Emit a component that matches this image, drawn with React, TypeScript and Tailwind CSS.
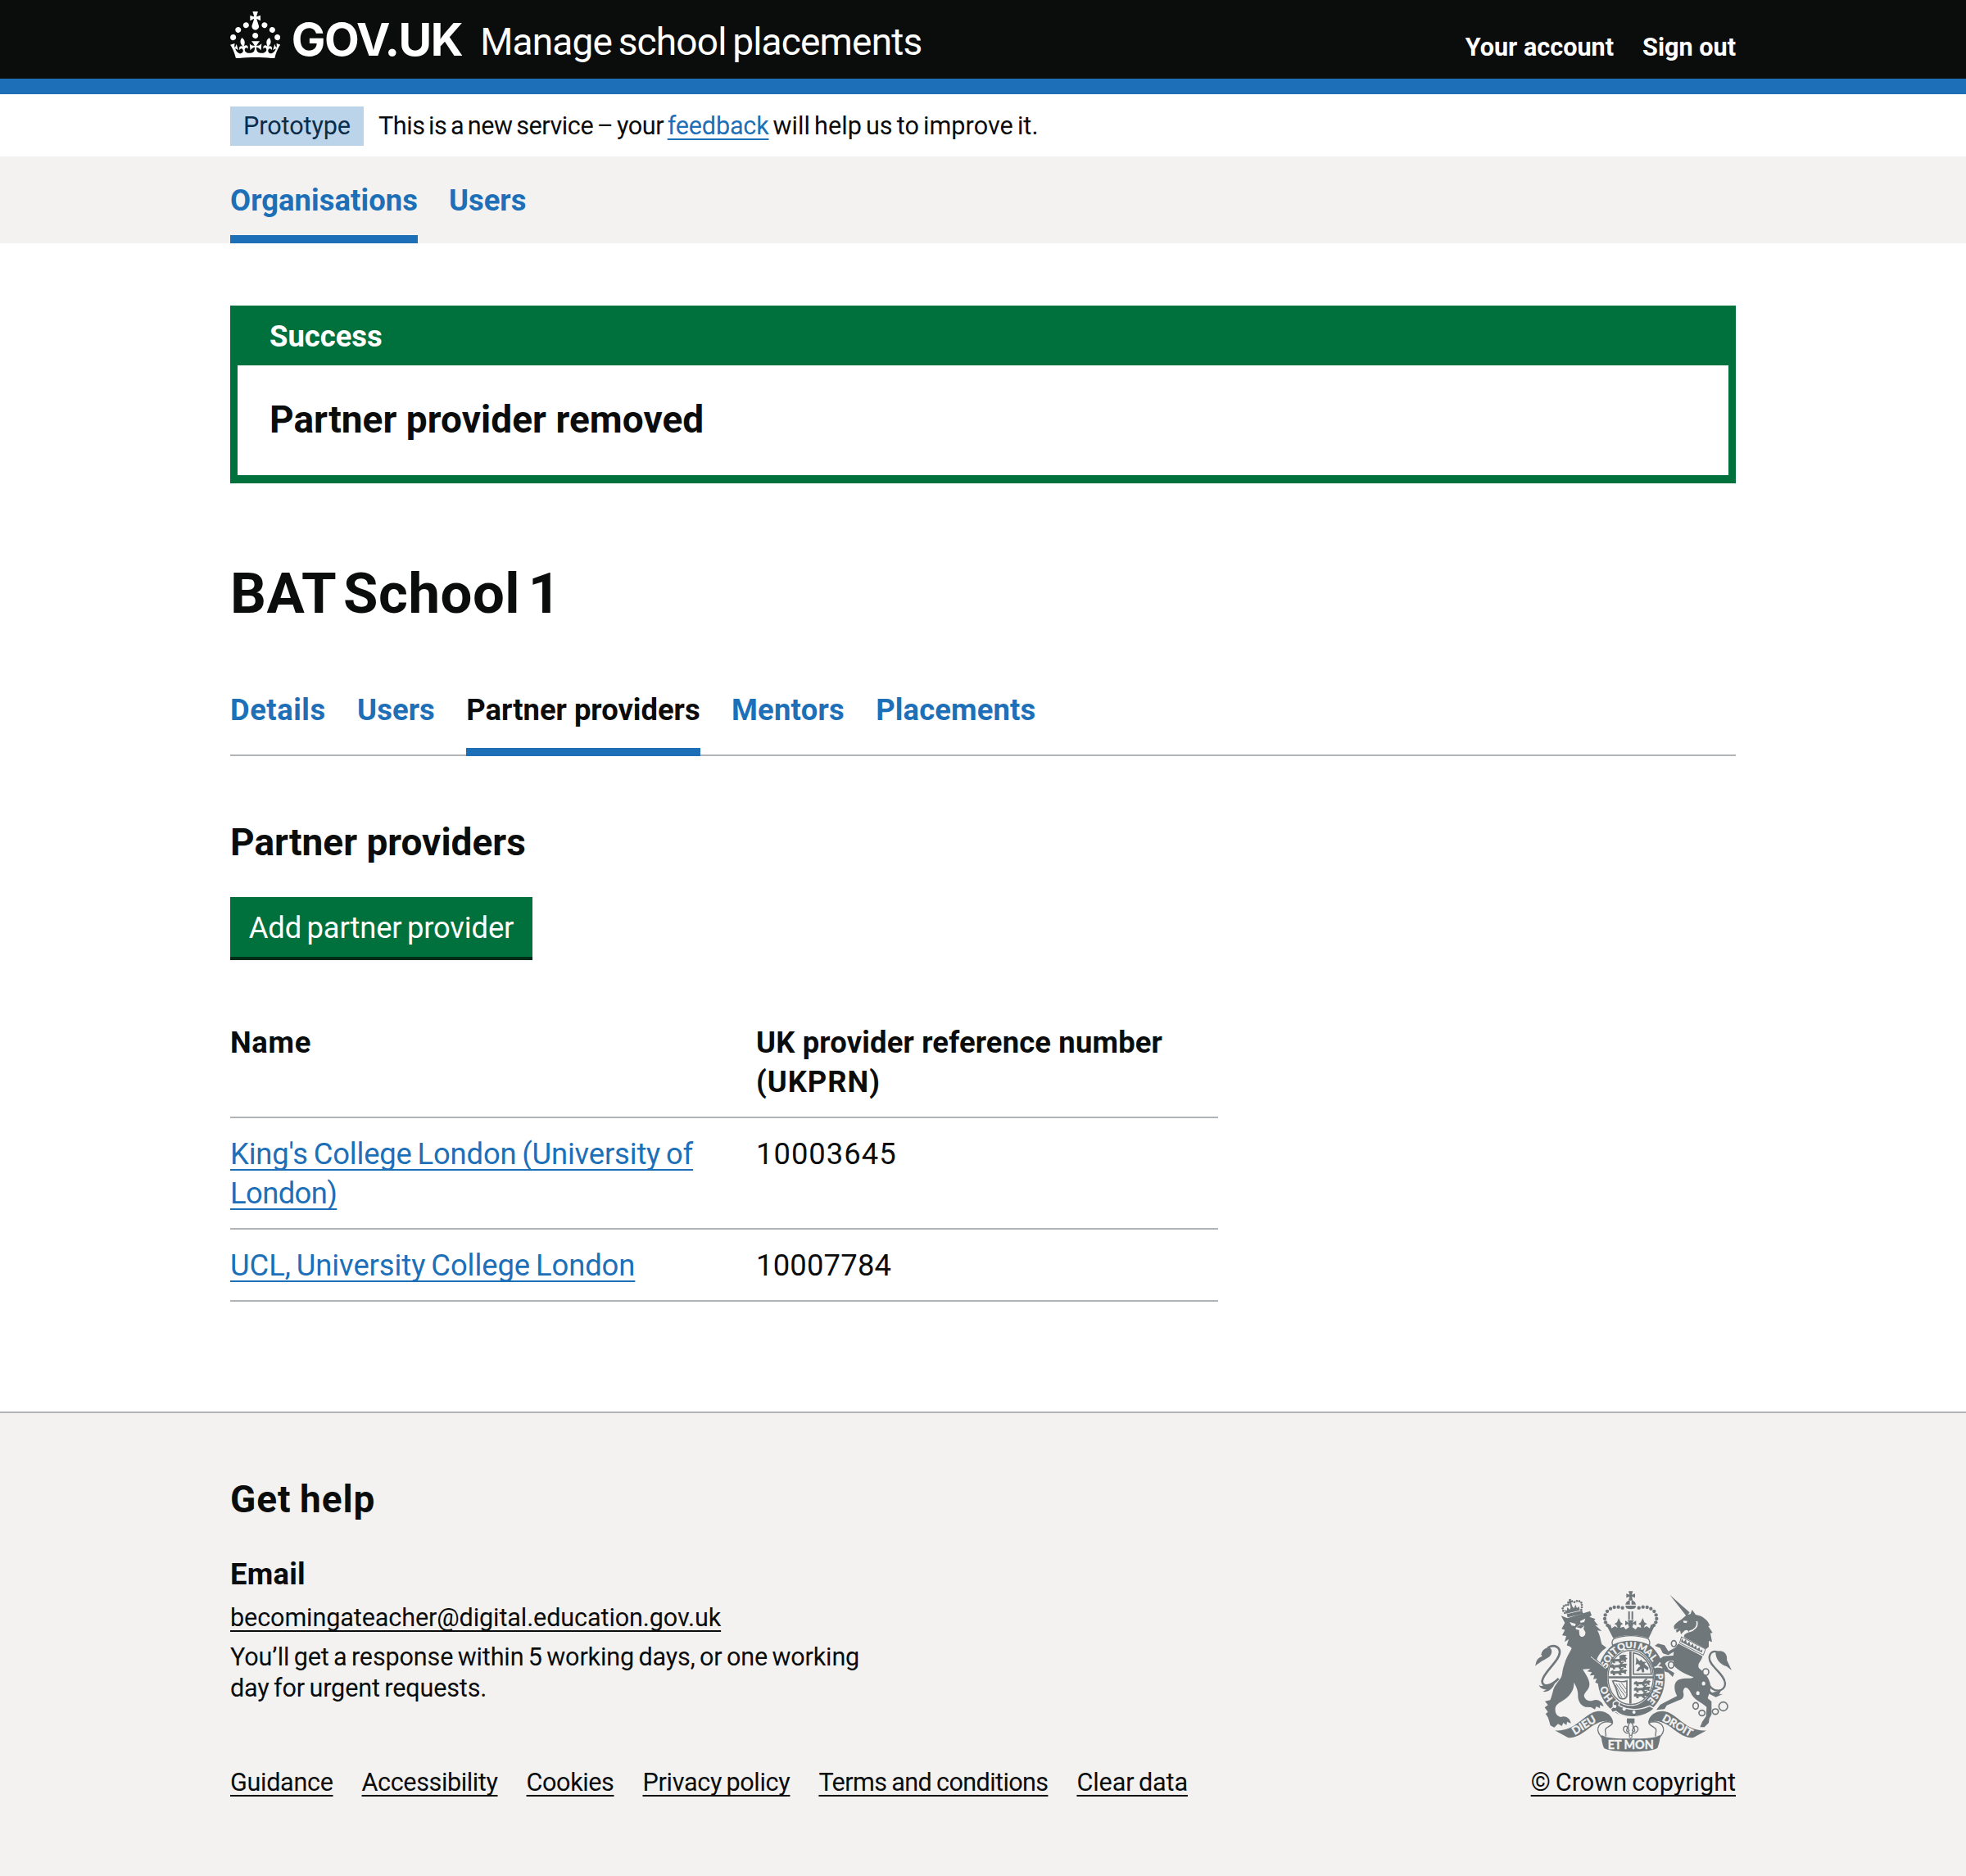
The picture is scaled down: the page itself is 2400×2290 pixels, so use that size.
import type { ReactNode } from "react";

const GREY = "#6f777b";
const PALE = "#f3f2f1";

function Crown() {
  return (
    <svg viewBox="0 0 32 30" className="h-[57.5px] w-[61.3px] shrink-0 fill-white" aria-hidden="true">
      <path d="M22.6 10.4c-1 .4-2-.1-2.4-1-.4-.9.1-2 1-2.4.9-.4 2 .1 2.4 1s-.1 2-1 2.4m-5.9 6.7c-.9.4-2-.1-2.4-1-.4-.9.1-2 1-2.4.9-.4 2 .1 2.4 1s-.1 2-1 2.4m10.8-3.7c-1 .4-2-.1-2.4-1-.4-.9.1-2 1-2.4.9-.4 2 .1 2.4 1s0 2-1 2.4m3.3 4.8c-1 .4-2-.1-2.4-1-.4-.9.1-2 1-2.4.9-.4 2 .1 2.4 1s-.1 2-1 2.4M17 4.7l2.3 1.2V2.5l-2.3.7-.2-.2.9-3h-3.4l.9 3-.2.2c-.1.1-2.3-.7-2.3-.7v3.4L15 4.7c.1.1.1.2.2.2l-1.3 4c-.1.2-.1.4-.1.6 0 1.1.8 2 1.9 2.2h.7c1-.2 1.9-1.1 1.9-2.1 0-.2 0-.4-.1-.6l-1.3-4c-.1-.2 0-.2.1-.3m-7.6 5.7c.9.4 2-.1 2.4-1 .4-.9-.1-2-1-2.4-.9-.4-2 .1-2.4 1s0 2 1 2.4m-5 3c.9.4 2-.1 2.4-1 .4-.9-.1-2-1-2.4-.9-.4-2 .1-2.4 1s.1 2 1 2.4m-3.2 4.8c.9.4 2-.1 2.4-1 .4-.9-.1-2-1-2.4-.9-.4-2 .1-2.4 1s0 2 1 2.4m14.8 11c4.4 0 8.6.3 12.3.8 1.1-4.5 2.4-7 3.7-8.8l-2.5-.9c.2 1.3.3 1.9 0 2.7-.4-.4-.8-1.1-1.1-2.3l-1.2 4c.7-.5 1.3-.8 2-.9-1.1 2.5-2.6 3.1-3.5 3-1.1-.2-1.7-1.2-1.5-2.1.3-1.2 1.5-1.5 2.1-.1 1.1-2.3-.8-3-2-2.3 1.9-1.9 2.1-3.5.6-5.6-2.1 1.6-2.1 3.2-1.2 5.5-1.2-1.4-3.2-.6-2.5 1.6.9-1.4 2.1-.5 1.9.8-.2 1.1-1.7 2.1-3.5 1.9-2.7-.2-2.9-2.1-2.9-3.6.7-.1 1.9.5 2.9 1.9l.4-4.3c-1.1 1.1-2.1 1.4-3.2 1.4.4-1.2 2.1-3 2.1-3h-5.4s1.7 1.9 2.1 3c-1.1 0-2.1-.2-3.2-1.4l.4 4.3c1-1.4 2.2-2 2.9-1.9-.1 1.5-.2 3.4-2.9 3.6-1.9.2-3.4-.8-3.5-1.9-.2-1.3 1-2.2 1.9-.8.7-2.3-1.2-3-2.5-1.6.9-2.2.9-3.9-1.2-5.5-1.5 2-1.3 3.7.6 5.6-1.2-.7-3.1 0-2 2.3.6-1.4 1.8-1.1 2.1.1.2.9-.3 1.9-1.5 2.1-.9.2-2.4-.5-3.5-3 .6 0 1.2.3 2 .9l-1.2-4c-.3 1.1-.7 1.9-1.1 2.3-.3-.8-.2-1.4 0-2.7l-2.9.9C1.3 23 2.6 25.5 3.7 30c3.7-.5 7.9-.8 12.3-.8" />
    </svg>
  );
}

/* Letters of the garter motto with their angle, clockwise from the top of the ring. */
const MOTTO: [string, number][] = [
  ["H", -127], ["O", -112],
  ["S", -67], ["O", -55], ["I", -45], ["T", -36],
  ["Q", -20], ["U", -4], ["I", 8],
  ["M", 24], ["A", 40], ["L", 53], ["Y", 70],
  ["P", 88], ["E", 99], ["N", 111], ["S", 123], ["E", 134],
];
const CROWN_PEARLS = [[362, 125], [347, 122], [332, 123], [318, 128], [306, 138], [299, 151], [297, 165], [300, 178], [307, 189]];
const LION_PEARLS = [[151, 144], [145, 136], [143, 127], [147, 119], [155, 115], [163, 114], [186, 104], [195, 100], [204, 101], [211, 106], [213, 114], [213, 123], [211, 132]];
const LIONS = [[318, 312], [318, 334], [318, 356], [404, 396], [404, 418], [404, 440]];

function MottoRing() {
  return (
    <>
      <path fillRule="evenodd" d="M394 238C462 238 517 302 517 382S462 525 394 525 271 462 271 382 326 238 394 238ZM392 276C345 276 306 322 306 380S345 484 392 484 478 438 478 380 439 276 392 276Z" fill={GREY} />
      {MOTTO.map(([c, deg], i) => {
        const a = (deg * Math.PI) / 180;
        const x = 393 + 92 * Math.sin(a);
        const y = 381 - 109 * Math.cos(a);
        return (
          <text key={i} x={x} y={y} transform={`rotate(${deg} ${x} ${y})`} textAnchor="middle" fontSize="35" fontWeight="700" fontFamily="Lato, sans-serif" fill={PALE} stroke={PALE} strokeWidth="1.2">
            {c}
          </text>
        );
      })}
    </>
  );
}

function RibbonSide() {
  return (
    <>
      <path d="M114 574L162 600C196 606 226 574 254 556C278 541 304 532 328 546C326 520 300 500 268 504C236 508 206 548 170 564C152 572 132 576 114 574Z" fill={GREY} />
      <path d="M326 546C298 536 270 548 272 574C273 586 282 592 290 606M326 546C322 560 300 560 299 572C298 582 304 588 300 596" fill="none" stroke={GREY} strokeWidth="4" />
    </>
  );
}

function CoatOfArms({ className }: { className: string }) {
  return (
    <svg viewBox="24 60 753 600" className={className} role="img" aria-label="Royal coat of arms" fill={GREY}>
      {/* Garter */}
      <MottoRing />

      {/* Lion */}
      <g>
        <path d="M158 148L214 135L218 146L161 160Z" />
        {LION_PEARLS.map(([x, y], i) => <circle key={i} cx={x} cy={y} r="4" />)}
        <path d="M165 94l9 -2l-1 6l7 -1l1 8l-7 0l4 14l6 8l6 -14l5 13l8 -6l3 14l-50 12l-7 -14l9 4l2 -14l9 10l3 -10l-3 -13l-8 2l-2 -8l7 -2Z" />
        <path d="M137 154L160 163L243 137L249 152L241 158L263 166L258 171L273 190L262 188L286 210L270 208C279 222 281 240 286 258L303 271C284 284 274 298 268 314C284 330 300 342 304 362L307 392L303 404L291 400L288 392L278 405L262 398L268 384L255 386L259 371L242 373L250 361L233 358L244 348L216 350C226 366 241 386 241 405C241 425 224 432 221 446C223 462 240 468 252 465C268 456 288 466 293 486L279 481L280 493L266 486L261 497L247 489L226 488C206 482 198 462 199 444C199 425 191 410 184 398C186 428 168 446 152 459C138 470 118 476 116 492C114 510 122 522 136 525C150 518 170 526 173 548L159 542L157 554L145 546L140 558L126 550L112 563L98 556C94 542 90 522 80 514L89 506L77 490L89 481L78 467L97 463C102 452 104 442 107 432C112 410 124 400 134 385C144 370 140 355 148 335C154 312 166 292 176 274C168 262 164 268 158 262L165 240L150 250L156 228L141 226L151 206L139 202L151 180Z" />
        <path d="M168 177L191 184L188 192L176 190ZM206 174L226 164L222 177L209 180Z" fill={PALE} />
        <path d="M190 198L207 186L222 192L219 202L226 214C228 232 208 238 204 222L203 206L192 204Z" fill={PALE} />
        <path d="M193 196L210 187L220 193L210 200Z" />
        <path d="M246 304C268 322 288 336 300 348" fill="none" stroke={PALE} strokeWidth="3" />
        <path d="M128 384C96 418 66 414 68 392C72 360 136 316 132 284C128 262 104 260 88 272" fill="none" stroke={GREY} strokeWidth="8" />
        <path d="M41 340C48 326 42 312 68 302L64 296C70 268 102 262 103 284C102 308 76 312 64 322C56 330 48 330 41 340Z" />
        <path d="M56 408C66 416 76 406 84 410L118 390C112 414 96 436 70 432L84 424C70 424 60 418 56 408Z" />
      </g>

      {/* Shield */}
      <g>
        <ellipse cx="392" cy="380" rx="83" ry="99" fill={PALE} stroke={GREY} strokeWidth="4" />
        <path d="M387 284h8v192h-8ZM311 376h164v7h-164Z" />
        <path d="M402 290C440 296 464 328 468 368H402Z" fill="none" stroke={GREY} strokeWidth="5" />
        <path d="M412 306l12 14l6 -6l6 8l14 2l-8 6l16 14l-4 10l-14 -10l2 16l-8 2l-4 -14l-10 10l-8 -2l8 -12l8 -6l-10 -8l-8 4l2 -12Z" />
        {LIONS.map(([x, y], i) => (
          <path key={i} transform={`translate(${x} ${y})`} d="M0 2l8 -5l6 4l18 -1l7 -9l8 -4l2 4l-7 6l14 -2l6 4l-6 4l2 8l-6 0l-4 -4l-10 1l4 7l-8 1l-6 -7l-12 1l2 6l-9 0l-1 -6l-8 0Z" />
        ))}
        <path d="M350 300l14 -4l14 2l-6 6l8 8l-16 -2l-12 4Z" />
        <path d="M326 393C342 388 356 402 378 392L378 448C372 462 352 462 346 446C342 428 334 408 326 393Z" fill="none" stroke={GREY} strokeWidth="5" />
        <path d="M338 402L372 450M348 402L374 438M358 400L376 424M336 408L360 454" stroke={GREY} strokeWidth="3" />
        <path d="M328 472l12 -8l12 8l-4 10C380 500 420 502 462 484L478 494C440 530 370 534 338 504l-14 4l-6 -12l10 -8Z" stroke={PALE} strokeWidth="4" />
        <circle cx="368" cy="496" r="6" fill={PALE} />
        <circle cx="404" cy="507" r="6" fill={PALE} />
        <circle cx="334" cy="486" r="6" fill={PALE} />
      </g>

      {/* Crown */}
      <g>
        <path d="M331 238Q392 216 456 238Q466 250 459 262Q392 232 326 262Q320 248 331 238Z" fill={PALE} stroke={GREY} strokeWidth="4" />
        <path d="M384 64h16l-4 13l12 -4v15l-12 -4l4 14h-16l4 -14l-12 4v-15l12 4Z" />
        <path d="M373 113C374 102 382 98 389 98V113ZM411 113C410 102 402 98 395 98V113Z" />
        <path d="M372 117h40l-4 10q-16 6 -32 0Z" />
        <path d="M383 138h6v30h-6ZM395 138h6v30h-6Z" />
        {CROWN_PEARLS.map(([x, y], i) => (
          <g key={i}>
            <circle cx={x} cy={y} r="6.5" />
            <circle cx={784 - x} cy={y} r="6.5" />
          </g>
        ))}
        <path d="M304 190L318 186L322 200L334 192L344 198L340 188L332 184L342 178L348 162L355 178L364 184L356 188L354 198L366 194L374 204L386 196L382 184L372 190V172L386 180L380 170H404L398 180L412 172V190L402 184L398 196L410 204L418 194L430 198L428 188L420 184L429 178L436 162L442 178L452 184L444 188L440 198L450 192L462 200L466 186L480 190L458 236Q392 214 328 236Z" />
      </g>

      {/* Unicorn */}
      <g>
        <path d="M535 77L608 142L596 155Z" />
        <path d="M550 193C552 183 570 172 578 167L598 150L611 148L617 132L630 150C654 154 674 168 682 190L676 192L692 216L684 218L690 250L678 246L678 268L668 276L590 234C582 226 592 220 606 214C600 204 596 205 590 208L576 222L573 208L560 216L558 206L568 200L552 204Z" />
        <path d="M584 172l16 1l-4 8l-10 -2Z" fill={PALE} />
        <path d="M634 174C640 194 624 208 606 212" fill="none" stroke={PALE} strokeWidth="5" />
        <path d="M578 231L666 276L658 298L571 254Z" fill={PALE} stroke={GREY} strokeWidth="3" />
        <path d="M576 250l4 -14l6 14l8 -10l4 17l9 -9l4 16l9 -8l3 14l9 -8l2 15l10 -8l3 14l8 -6l-2 12Z" />
        <path d="M566 256L655 302C652 320 634 328 642 346C662 362 676 378 682 398C690 424 678 440 674 456L688 468V516L680 530L678 546L662 562H646L654 542L668 522L670 488C650 470 622 462 612 436C600 410 586 412 584 432C590 452 582 460 566 464L524 482L516 496L486 499L500 480L518 470L562 448C548 424 548 392 574 386C592 380 616 388 622 378C600 372 562 352 552 338L548 318C530 318 522 322 518 330L530 350L552 364L546 378L530 362L516 358L508 334L496 314L512 302L548 300L550 286L530 298L510 292L500 272L480 264L492 256L516 262L530 284L556 270Z" />
        <path d="M674 398C692 440 738 434 738 402C736 366 680 340 680 308C682 284 700 280 716 290" fill="none" stroke={GREY} strokeWidth="7" />
        <path d="M703 286C730 274 748 294 744 316L762 354L744 340C718 332 702 312 703 286Z" />
        <path d="M672 418L690 436L724 426L716 442L730 440L704 452L680 440Z" />
        <g fill={PALE} stroke={GREY} strokeWidth="5">
          <ellipse cx="550" cy="256" rx="9" ry="11" />
          <ellipse cx="540" cy="334" rx="10" ry="12" />
          <ellipse cx="667" cy="360" rx="11" ry="12" />
          <ellipse cx="659" cy="402" rx="9" ry="10" />
          <ellipse cx="638" cy="437" rx="9" ry="10" />
          <ellipse cx="630" cy="484" rx="10" ry="12" />
          <ellipse cx="653" cy="510" rx="11" ry="10" />
          <ellipse cx="702" cy="505" rx="11" ry="10" />
          <circle cx="731" cy="486" r="16" />
        </g>
      </g>

      {/* Ribbon */}
      <g>
        <RibbonSide />
        <g transform="translate(784 0) scale(-1 1)"><RibbonSide /></g>
        <path d="M285 590C300 602 340 604 392 604S484 602 500 590C500 606 496 624 490 638C470 656 314 656 294 638C288 624 284 606 285 590Z" />
        <path d="M378 530h28v18h-28Z" />
        <path d="M392 542C402 552 404 562 398 574C402 582 410 576 406 570C400 562 410 552 418 564C422 576 408 588 398 582L396 592H388L386 582C376 588 362 576 366 564C374 552 384 562 378 570C374 576 382 582 386 574C380 562 382 552 392 542Z" fill={PALE} stroke={GREY} strokeWidth="4" />
        <circle cx="392" cy="597" r="5" fill={PALE} stroke={GREY} strokeWidth="3" />
        <g fill={PALE} stroke={PALE} strokeWidth="1.2" fontFamily="Lato, sans-serif" fontWeight="700" textAnchor="middle">
          <text x="392" y="641" fontSize="43">ET MON</text>
          <text fontSize="40" transform="translate(228 566) rotate(-32)">DIEU</text>
          <text fontSize="39" transform="translate(557 567) rotate(30)">DROIT</text>
        </g>
      </g>
    </svg>
  );
}

function Container({ className = "", children }: { className?: string; children: ReactNode }) {
  return <div className={`mx-auto w-[1838px] ${className}`}>{children}</div>;
}

const TABS = [
  { label: "Details", className: "tracking-[0.53px]" },
  { label: "Users", className: "tracking-[0.1px]" },
  { label: "Partner providers", className: "border-b-[10px] border-[#1d70b8] text-[#0b0c0c]" },
  { label: "Mentors", className: "tracking-[0.24px]" },
  { label: "Placements", className: "tracking-[0.12px]" },
];

const FOOTER_LINKS = [
  { label: "Guidance", className: "tracking-[-0.33px]" },
  { label: "Accessibility", className: "tracking-[-0.4px]" },
  { label: "Cookies", className: "tracking-[-0.4px]" },
  { label: "Privacy policy", className: "tracking-[-0.32px] [word-spacing:-2px]" },
  { label: "Terms and conditions", className: "tracking-[-0.63px] [word-spacing:-1px]" },
  { label: "Clear data", className: "tracking-[-0.12px] [word-spacing:-2px]" },
];

const LINK = "underline decoration-2 [text-decoration-skip-ink:none]";

export default function App() {
  return (
    <div className="min-h-[2290px] w-[2400px] bg-white font-['Roboto',sans-serif] text-[36.4px] leading-[48px] text-[#0b0c0c]">
      <header className="h-[115px] border-b-[19px] border-[#1d70b8] bg-[#0b0c0c] text-white">
        <Container className="flex h-[96px] items-start">
          <a className="flex pt-[13.5px]">
            <Crown />
            <span className="ml-[13.5px] font-['Inter',sans-serif] text-[55.5px] font-bold leading-[68px] tracking-[-1.5px]">GOV.UK</span>
          </a>
          <a className="ml-[22px] mt-[23px] text-[46px] leading-[56px] tracking-[-0.82px] [word-spacing:-3px]">Manage school placements</a>
          <nav className="ml-auto mt-[39px] flex gap-[35px] text-[30.6px] font-bold leading-[38px]">
            <a>Your account</a>
            <a>Sign out</a>
          </nav>
        </Container>
      </header>

      <div className="h-[76px]">
        <Container className="flex items-start pt-[15px] text-[30.6px] leading-[38px]">
          <strong className="flex h-[48px] w-[163px] items-center justify-center bg-[#bbd4ea] font-normal tracking-[-0.1px] text-[#0c2d4a]">Prototype</strong>
          <p className="ml-[18px] mt-[5px] tracking-[-0.46px] [word-spacing:-2.5px]">
            This is a new service – your <a className={`${LINK} tracking-[-0.2px] text-[#1d70b8] underline-offset-[5px]`}>feedback</a>
            <span className="tracking-[0.02px]"> will help us to improve it.</span>
          </p>
        </Container>
      </div>

      <div className="h-[106px] bg-[#f3f2f1]">
        <Container className="flex gap-[38px] font-bold text-[#1d70b8]">
          <a className="h-[106px] border-b-[10px] border-[#1d70b8] pt-[30px] tracking-[0.07px]">Organisations</a>
          <a className="h-[106px] pt-[30px]">Users</a>
        </Container>
      </div>

      <Container>
        <section className="mt-[76px] border-x-[9px] border-b-[10px] border-[#00703c] font-bold">
          <h2 className="h-[73px] bg-[#00703c] pl-[39px] pt-[14px] text-white">Success</h2>
          <p className="pb-[40px] pl-[39px] pt-[38px] text-[46px] leading-[56px] tracking-[0.05px]">Partner provider removed</p>
        </section>

        <h1 className="mt-[97px] text-[68.9px] font-bold leading-[76px] tracking-[0.5px] [word-spacing:-8px]">BAT School 1</h1>

        <nav className="mt-[80px] flex gap-[38.3px] font-bold text-[#1d70b8] shadow-[inset_0_-2px_0_#b1b4b6]">
          {TABS.map((t) => (
            <a key={t.label} className={`h-[80px] ${t.className}`}>{t.label}</a>
          ))}
        </nav>

        <h2 className="mt-[77px] text-[46px] font-bold leading-[56px]">Partner providers</h2>
        <button className="mt-[39px] flex h-[77px] w-[369px] justify-center border-b-4 border-[#002d18] bg-[#00703c] pt-[14px] tracking-[-0.15px] text-white [word-spacing:-2.5px]">Add partner provider</button>

        <table className="mt-[76px] w-[1206px] table-fixed border-collapse text-left">
          <thead>
            <tr className="border-b-2 border-[#b1b4b6] align-top">
              <th className="w-[642px] pb-[18px] pt-px font-bold tracking-[0.67px]">Name</th>
              <th className="pb-[18px] pt-px font-bold tracking-[0.16px]">UK provider reference number <span className="tracking-[1px]">(UKPRN)</span></th>
            </tr>
          </thead>
          <tbody>
            <tr className="border-b-2 border-[#b1b4b6] align-top">
              <td className="pb-[18px] pt-[20px] tracking-[-0.17px] [word-spacing:-2px]">
                <a className={`${LINK} text-[#1d70b8] underline-offset-[6px]`}>King's College London (University of<br /><span className="tracking-[-0.6px]">London)</span></a>
              </td>
              <td className="pb-[18px] pt-[20px] tracking-[1px]">10003645</td>
            </tr>
            <tr className="border-b-2 border-[#b1b4b6] align-top">
              <td className="pb-[18px] pt-[20px] tracking-[-0.07px] [word-spacing:-2px]">
                <a className={`${LINK} text-[#1d70b8] underline-offset-[6px]`}>UCL, University College London</a>
              </td>
              <td className="pb-[18px] pt-[20px] tracking-[0.2px]">10007784</td>
            </tr>
          </tbody>
        </table>
      </Container>

      <footer className="mt-[134px] h-[567px] border-t-2 border-[#b1b4b6] bg-[#f3f2f1]">
        <Container className="flex items-end justify-between pt-[77px] text-[30.6px] leading-[38px]">
          <div>
            <h2 className="text-[46px] font-bold leading-[56px] tracking-[0.95px] [word-spacing:-2px]">Get help</h2>
            <h3 className="mt-[40px] text-[36.4px] font-bold leading-[48px] tracking-[0.25px]">Email</h3>
            <p className="mt-[10px] tracking-[-0.12px]"><a className={`${LINK} underline-offset-[5px]`}>becomingateacher@digital.education.gov.uk</a></p>
            <p className="mt-[10px] w-[800px] tracking-[-0.16px] [word-spacing:-2px]">You’ll get a response within 5 working days, or one working <br />day for urgent requests.</p>
            <ul className="mt-[77px] flex gap-[35px]">
              {FOOTER_LINKS.map((l) => <li key={l.label}><a className={`${LINK} underline-offset-[5px] ${l.className}`}>{l.label}</a></li>)}
            </ul>
          </div>
          <div className="flex flex-col items-end">
            <CoatOfArms className="h-[200px] w-[251px]" />
            <a className={`${LINK} mt-[16px] underline-offset-[5px] [word-spacing:-1.5px]`}>© Crown copyright</a>
          </div>
        </Container>
      </footer>
    </div>
  );
}
